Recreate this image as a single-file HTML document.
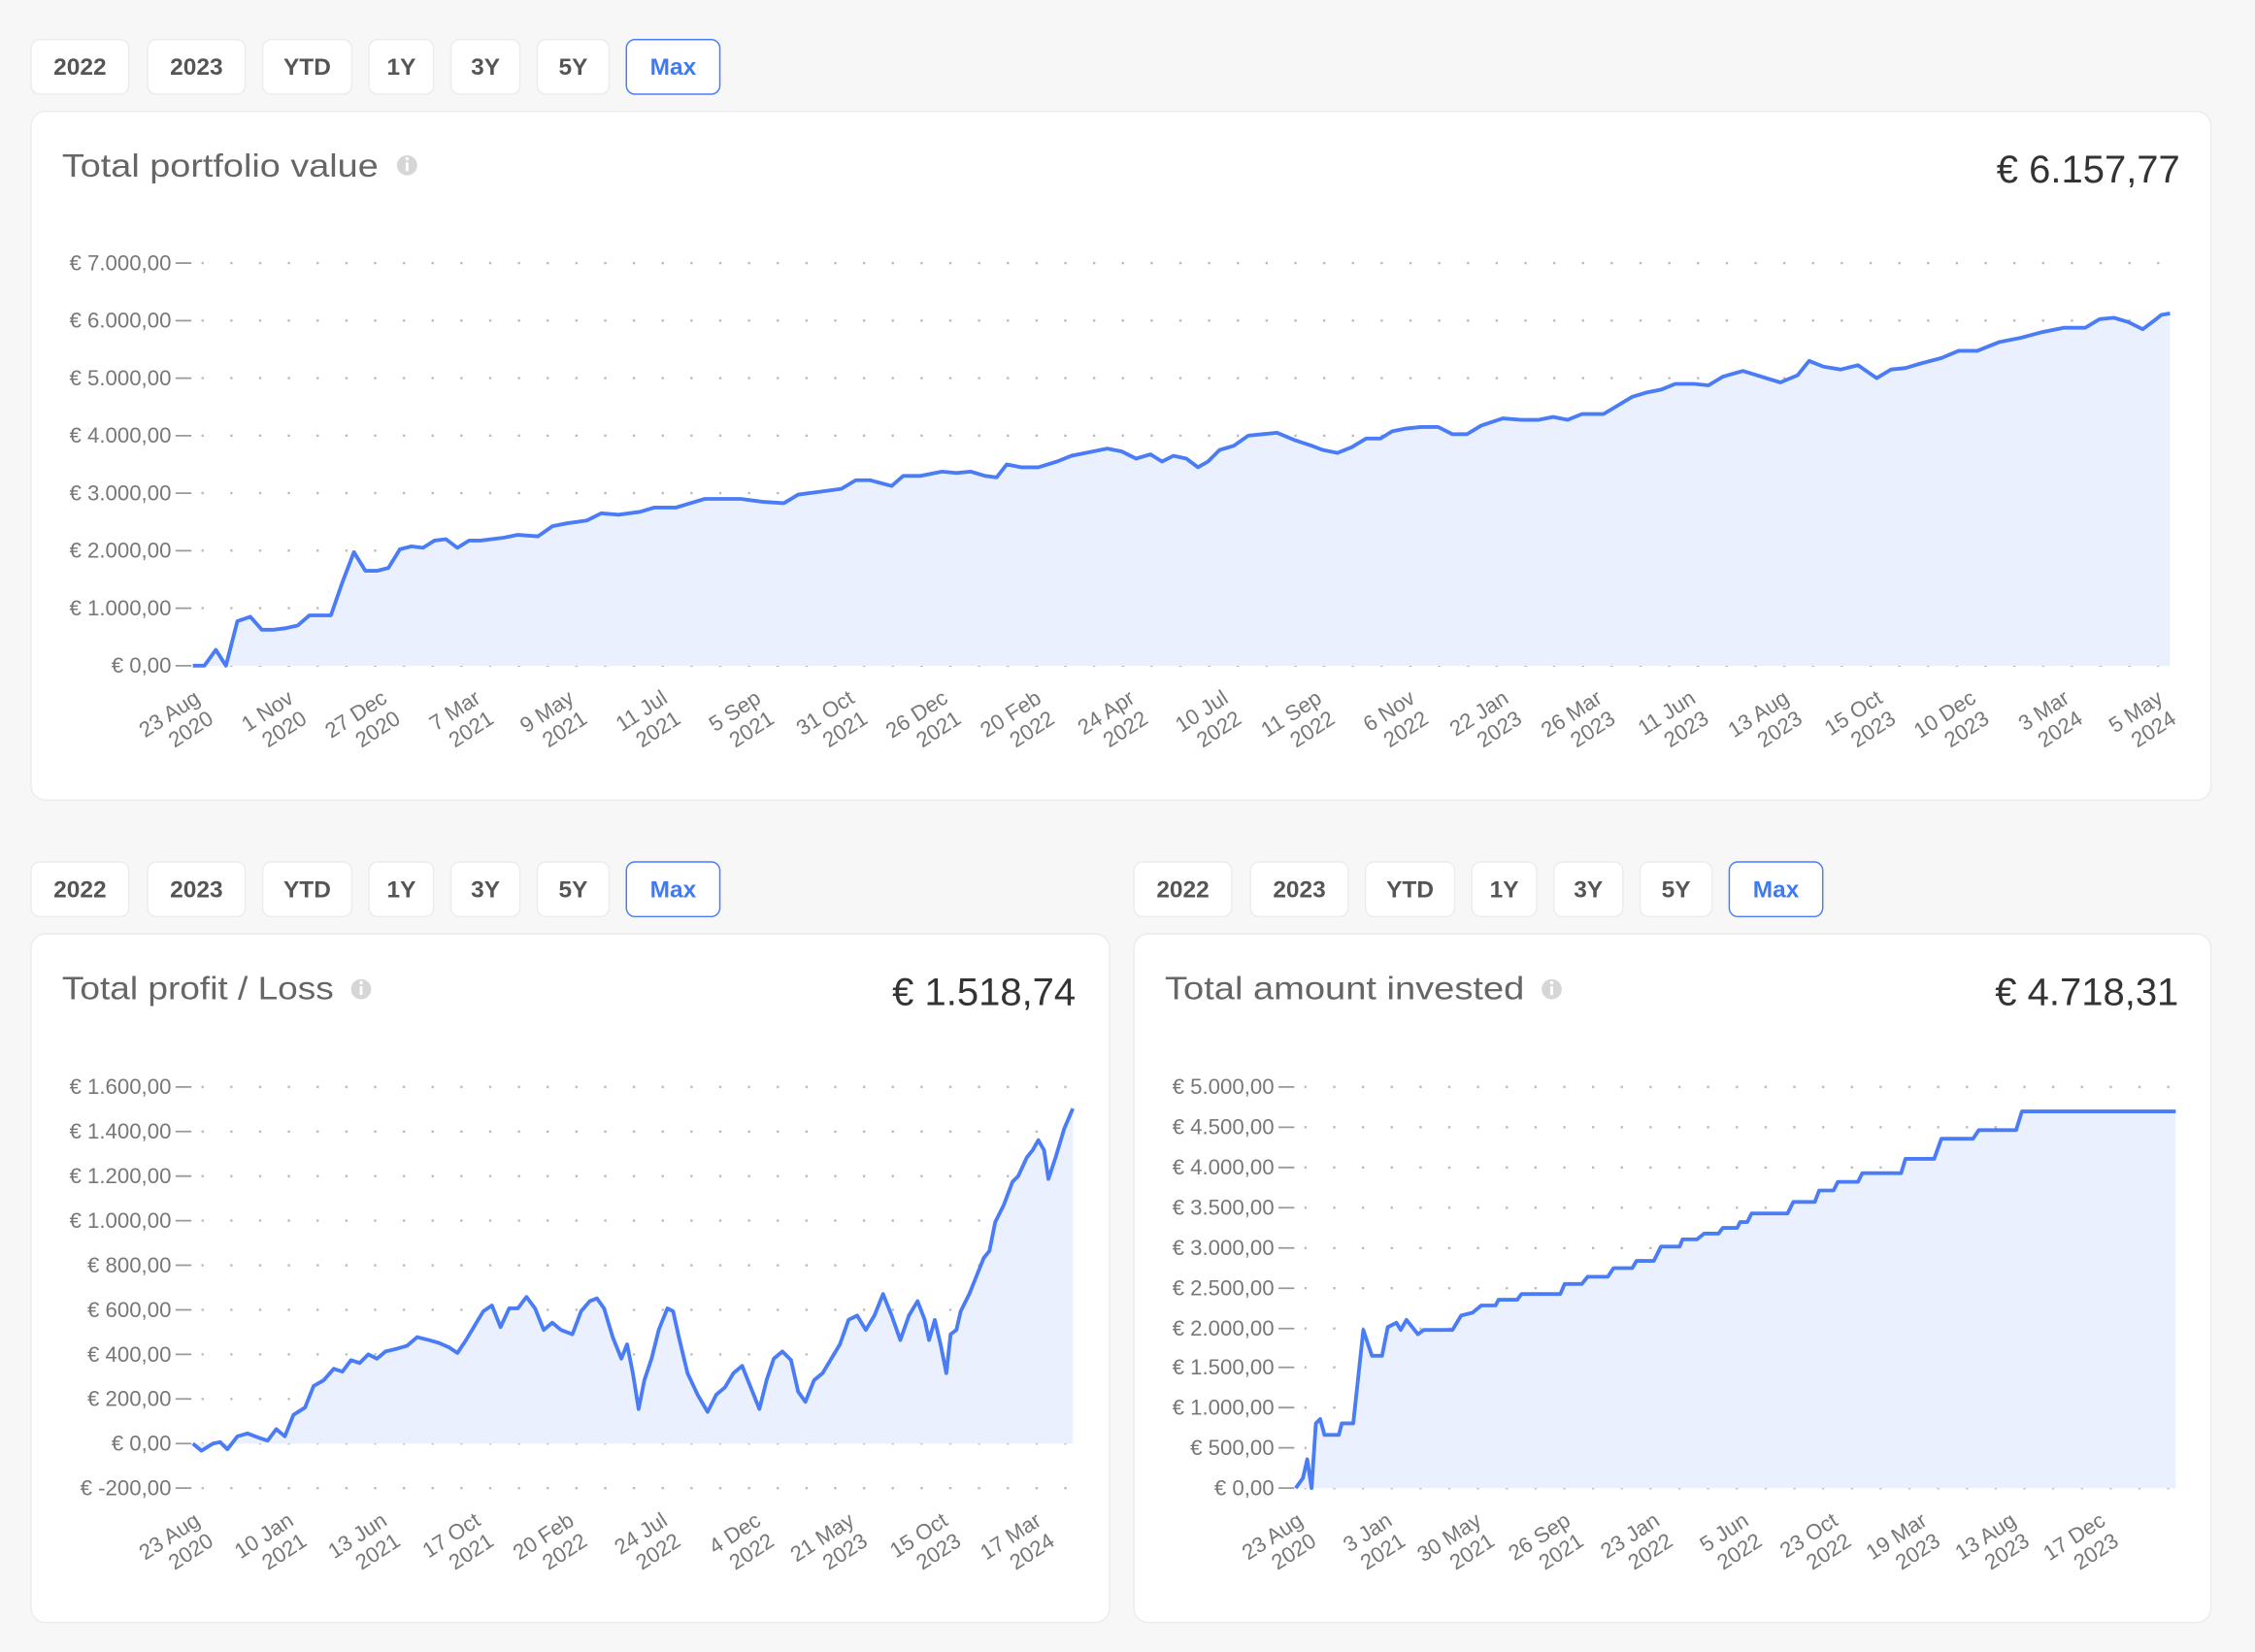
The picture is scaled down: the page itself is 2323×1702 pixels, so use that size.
<!DOCTYPE html>
<html><head><meta charset="utf-8"><style>
html,body{margin:0;padding:0;background:#f7f7f7;}
svg{display:block;}
text{font-family:"Liberation Sans",sans-serif;}
.b{font-size:16.5px;font-weight:bold;fill:#555;text-anchor:middle;}
.bm{font-size:16.5px;font-weight:bold;fill:#3f7af5;text-anchor:middle;}
.t{font-size:22.5px;fill:#666;}
.v{font-size:27px;fill:#333;text-anchor:end;}
.y{font-size:15px;fill:#777;text-anchor:end;}
.x{font-size:15px;fill:#777;text-anchor:end;}
.g{stroke:#bbb;stroke-width:1.6;stroke-dasharray:1.6 18.4;}
.tk{stroke:#999;stroke-width:1.2;}
.ln{fill:none;stroke:#4a7cf7;stroke-width:2.6;stroke-linejoin:round;}
.ar{fill:#eaf0fd;stroke:none;}
</style></head><body>
<svg width="2323" height="1702" viewBox="0 0 1568 1149" xmlns="http://www.w3.org/2000/svg">
<rect width="1568" height="1149" fill="#f7f7f7"/>

<g id="btns">
<rect x="21.5" y="27.5" width="68" height="38" rx="6" fill="#fff" stroke="#ececec"/>
<rect x="102.5" y="27.5" width="68" height="38" rx="6" fill="#fff" stroke="#ececec"/>
<rect x="182.5" y="27.5" width="62" height="38" rx="6" fill="#fff" stroke="#ececec"/>
<rect x="256.5" y="27.5" width="45" height="38" rx="6" fill="#fff" stroke="#ececec"/>
<rect x="313.5" y="27.5" width="48" height="38" rx="6" fill="#fff" stroke="#ececec"/>
<rect x="373.5" y="27.5" width="50" height="38" rx="6" fill="#fff" stroke="#ececec"/>
<rect x="435.5" y="27.5" width="65" height="38" rx="6" fill="#fff" stroke="#4a7cf7"/>
<text class="b" x="55.5" y="52">2022</text>
<text class="b" x="136.5" y="52">2023</text>
<text class="b" x="213.5" y="52">YTD</text>
<text class="b" x="279" y="52">1Y</text>
<text class="b" x="337.5" y="52">3Y</text>
<text class="b" x="398.5" y="52">5Y</text>
<text class="bm" x="468" y="52">Max</text>
</g>
<use href="#btns" x="0" y="572"/>
<use href="#btns" x="767" y="572"/>

<!-- Card 1 -->
<rect x="21.5" y="77.5" width="1516" height="479" rx="10" fill="#fff" stroke="#ececec"/>
<text class="t" x="43" y="123" textLength="220" lengthAdjust="spacingAndGlyphs">Total portfolio value</text>
<circle cx="283" cy="115" r="7" fill="#d6d6d6"/><rect x="282" y="113" width="2" height="6" fill="#fff"/><circle cx="283" cy="110.5" r="1.2" fill="#fff"/>
<text class="v" x="1516" y="127">€ 6.157,77</text>
<g>
<line class="g" x1="140" y1="183" x2="1505" y2="183"/>
<line class="g" x1="140" y1="223" x2="1505" y2="223"/>
<line class="g" x1="140" y1="263" x2="1505" y2="263"/>
<line class="g" x1="140" y1="303" x2="1505" y2="303"/>
<line class="g" x1="140" y1="343" x2="1505" y2="343"/>
<line class="g" x1="140" y1="383" x2="1505" y2="383"/>
<line class="g" x1="140" y1="423" x2="1505" y2="423"/>
<line class="g" x1="140" y1="463" x2="1505" y2="463"/>
<g class="tk"><line x1="122" y1="183" x2="133" y2="183"/><line x1="122" y1="223" x2="133" y2="223"/><line x1="122" y1="263" x2="133" y2="263"/><line x1="122" y1="303" x2="133" y2="303"/><line x1="122" y1="343" x2="133" y2="343"/><line x1="122" y1="383" x2="133" y2="383"/><line x1="122" y1="423" x2="133" y2="423"/><line x1="122" y1="463" x2="133" y2="463"/></g>
<text class="y" x="119" y="188">€ 7.000,00</text>
<text class="y" x="119" y="228">€ 6.000,00</text>
<text class="y" x="119" y="268">€ 5.000,00</text>
<text class="y" x="119" y="308">€ 4.000,00</text>
<text class="y" x="119" y="348">€ 3.000,00</text>
<text class="y" x="119" y="388">€ 2.000,00</text>
<text class="y" x="119" y="428">€ 1.000,00</text>
<text class="y" x="119" y="468">€ 0,00</text>
</g>
<path class="ar" d="M134,463 L142,463 L150,452 L157,463 L165,432 L174,429 L182,438 L190,438 L198,437 L207,435 L215,428 L230,428 L238,405 L246,384 L254,397 L262,397 L270,395 L278,382 L286,380 L294,381 L302,376 L310,375 L318,381 L326,376 L334,376 L350,374 L360,372 L374,373 L384,366 L394,364 L408,362 L418,357 L430,358 L445,356 L455,353 L470,353 L480,350 L490,347 L500,347 L515,347 L530,349 L545,350 L555,344 L570,342 L585,340 L595,334 L605,334 L620,338 L628,331 L640,331 L655,328 L665,329 L675,328 L685,331 L693,332 L700,323 L710,325 L722,325 L735,321 L745,317 L760,314 L770,312 L780,314 L790,319 L800,316 L808,321 L816,317 L825,319 L833,325 L840,321 L848,313 L858,310 L868,303 L878,302 L888,301 L900,306 L912,310 L920,313 L930,315 L940,311 L950,305 L960,305 L968,300 L978,298 L988,297 L1000,297 L1010,302 L1020,302 L1030,296 L1045,291 L1058,292 L1070,292 L1080,290 L1090,292 L1100,288 L1115,288 L1125,282 L1135,276 L1145,273 L1155,271 L1165,267 L1178,267 L1188,268 L1198,262 L1212,258 L1225,262 L1238,266 L1250,261 L1258,251 L1268,255 L1280,257 L1292,254 L1305,263 L1315,257 L1325,256 L1335,253 L1350,249 L1362,244 L1375,244 L1390,238 L1405,235 L1420,231 L1435,228 L1450,228 L1460,222 L1470,221 L1480,224 L1490,229 L1498,223 L1503,219 L1509,218 L1509,463 Z"/>
<path class="ln" d="M134,463 L142,463 L150,452 L157,463 L165,432 L174,429 L182,438 L190,438 L198,437 L207,435 L215,428 L230,428 L238,405 L246,384 L254,397 L262,397 L270,395 L278,382 L286,380 L294,381 L302,376 L310,375 L318,381 L326,376 L334,376 L350,374 L360,372 L374,373 L384,366 L394,364 L408,362 L418,357 L430,358 L445,356 L455,353 L470,353 L480,350 L490,347 L500,347 L515,347 L530,349 L545,350 L555,344 L570,342 L585,340 L595,334 L605,334 L620,338 L628,331 L640,331 L655,328 L665,329 L675,328 L685,331 L693,332 L700,323 L710,325 L722,325 L735,321 L745,317 L760,314 L770,312 L780,314 L790,319 L800,316 L808,321 L816,317 L825,319 L833,325 L840,321 L848,313 L858,310 L868,303 L878,302 L888,301 L900,306 L912,310 L920,313 L930,315 L940,311 L950,305 L960,305 L968,300 L978,298 L988,297 L1000,297 L1010,302 L1020,302 L1030,296 L1045,291 L1058,292 L1070,292 L1080,290 L1090,292 L1100,288 L1115,288 L1125,282 L1135,276 L1145,273 L1155,271 L1165,267 L1178,267 L1188,268 L1198,262 L1212,258 L1225,262 L1238,266 L1250,261 L1258,251 L1268,255 L1280,257 L1292,254 L1305,263 L1315,257 L1325,256 L1335,253 L1350,249 L1362,244 L1375,244 L1390,238 L1405,235 L1420,231 L1435,228 L1450,228 L1460,222 L1470,221 L1480,224 L1490,229 L1498,223 L1503,219 L1509,218"/>
<g>
<g transform="translate(140,488) rotate(-33)"><text class="x">23 Aug</text><text class="x" y="17">2020</text></g>
<g transform="translate(205,488) rotate(-33)"><text class="x">1 Nov</text><text class="x" y="17">2020</text></g>
<g transform="translate(270,488) rotate(-33)"><text class="x">27 Dec</text><text class="x" y="17">2020</text></g>
<g transform="translate(335,488) rotate(-33)"><text class="x">7 Mar</text><text class="x" y="17">2021</text></g>
<g transform="translate(400,488) rotate(-33)"><text class="x">9 May</text><text class="x" y="17">2021</text></g>
<g transform="translate(465,488) rotate(-33)"><text class="x">11 Jul</text><text class="x" y="17">2021</text></g>
<g transform="translate(530,488) rotate(-33)"><text class="x">5 Sep</text><text class="x" y="17">2021</text></g>
<g transform="translate(595,488) rotate(-33)"><text class="x">31 Oct</text><text class="x" y="17">2021</text></g>
<g transform="translate(660,488) rotate(-33)"><text class="x">26 Dec</text><text class="x" y="17">2021</text></g>
<g transform="translate(725,488) rotate(-33)"><text class="x">20 Feb</text><text class="x" y="17">2022</text></g>
<g transform="translate(790,488) rotate(-33)"><text class="x">24 Apr</text><text class="x" y="17">2022</text></g>
<g transform="translate(855,488) rotate(-33)"><text class="x">10 Jul</text><text class="x" y="17">2022</text></g>
<g transform="translate(920,488) rotate(-33)"><text class="x">11 Sep</text><text class="x" y="17">2022</text></g>
<g transform="translate(985,488) rotate(-33)"><text class="x">6 Nov</text><text class="x" y="17">2022</text></g>
<g transform="translate(1050,488) rotate(-33)"><text class="x">22 Jan</text><text class="x" y="17">2023</text></g>
<g transform="translate(1115,488) rotate(-33)"><text class="x">26 Mar</text><text class="x" y="17">2023</text></g>
<g transform="translate(1180,488) rotate(-33)"><text class="x">11 Jun</text><text class="x" y="17">2023</text></g>
<g transform="translate(1245,488) rotate(-33)"><text class="x">13 Aug</text><text class="x" y="17">2023</text></g>
<g transform="translate(1310,488) rotate(-33)"><text class="x">15 Oct</text><text class="x" y="17">2023</text></g>
<g transform="translate(1375,488) rotate(-33)"><text class="x">10 Dec</text><text class="x" y="17">2023</text></g>
<g transform="translate(1440,488) rotate(-33)"><text class="x">3 Mar</text><text class="x" y="17">2024</text></g>
<g transform="translate(1505,488) rotate(-33)"><text class="x">5 May</text><text class="x" y="17">2024</text></g>
</g>

<!-- Card 2 -->
<rect x="21.5" y="649.5" width="750" height="479" rx="10" fill="#fff" stroke="#ececec"/>
<text class="t" x="43" y="695" textLength="189" lengthAdjust="spacingAndGlyphs">Total profit / Loss</text>
<circle cx="251" cy="688" r="7" fill="#d6d6d6"/><rect x="250" y="686" width="2" height="6" fill="#fff"/><circle cx="251" cy="683.5" r="1.2" fill="#fff"/>
<text class="v" x="748" y="699">€ 1.518,74</text>
<g>
<line class="g" x1="140" y1="756" x2="748" y2="756"/>
<line class="g" x1="140" y1="787" x2="748" y2="787"/>
<line class="g" x1="140" y1="818" x2="748" y2="818"/>
<line class="g" x1="140" y1="849" x2="748" y2="849"/>
<line class="g" x1="140" y1="880" x2="748" y2="880"/>
<line class="g" x1="140" y1="911" x2="748" y2="911"/>
<line class="g" x1="140" y1="942" x2="748" y2="942"/>
<line class="g" x1="140" y1="973" x2="748" y2="973"/>
<line class="g" x1="140" y1="1004" x2="748" y2="1004"/>
<line class="g" x1="140" y1="1035" x2="748" y2="1035"/>
<g class="tk"><line x1="122" y1="756" x2="133" y2="756"/><line x1="122" y1="787" x2="133" y2="787"/><line x1="122" y1="818" x2="133" y2="818"/><line x1="122" y1="849" x2="133" y2="849"/><line x1="122" y1="880" x2="133" y2="880"/><line x1="122" y1="911" x2="133" y2="911"/><line x1="122" y1="942" x2="133" y2="942"/><line x1="122" y1="973" x2="133" y2="973"/><line x1="122" y1="1004" x2="133" y2="1004"/><line x1="122" y1="1035" x2="133" y2="1035"/></g>
<text class="y" x="119" y="761">€ 1.600,00</text>
<text class="y" x="119" y="792">€ 1.400,00</text>
<text class="y" x="119" y="823">€ 1.200,00</text>
<text class="y" x="119" y="854">€ 1.000,00</text>
<text class="y" x="119" y="885">€ 800,00</text>
<text class="y" x="119" y="916">€ 600,00</text>
<text class="y" x="119" y="947">€ 400,00</text>
<text class="y" x="119" y="978">€ 200,00</text>
<text class="y" x="119" y="1009">€ 0,00</text>
<text class="y" x="119" y="1040">€ -200,00</text>
</g>
<path class="ar" d="M134,1004 L140,1009 L148,1004 L153,1003 L158,1008 L165,999 L172,997 L180,1000 L186,1002 L192,994 L198,999 L204,984 L212,979 L218,964 L225,960 L232,952 L238,954 L244,946 L250,948 L256,942 L262,945 L268,940 L276,938 L283,936 L290,930 L298,932 L305,934 L312,937 L318,941 L324,932 L330,922 L336,912 L342,908 L348,923 L354,910 L360,910 L366,902 L372,910 L378,925 L384,920 L390,925 L398,928 L404,912 L410,905 L415,903 L420,910 L426,930 L432,945 L436,935 L440,955 L444,980 L448,960 L453,945 L458,925 L464,910 L468,912 L472,930 L478,955 L485,970 L492,982 L498,970 L504,965 L510,955 L516,950 L520,960 L524,970 L528,980 L533,960 L538,945 L544,940 L550,946 L555,968 L560,975 L566,960 L572,955 L578,945 L584,935 L590,918 L596,915 L602,925 L608,915 L614,900 L620,915 L626,932 L632,915 L638,905 L643,918 L646,932 L650,918 L654,935 L658,955 L661,928 L665,925 L668,912 L674,900 L680,885 L684,875 L688,870 L692,850 L698,838 L704,822 L708,818 L714,805 L718,800 L722,793 L726,800 L729,820 L734,805 L740,785 L746,771 L746,1004 Z"/>
<path class="ln" d="M134,1004 L140,1009 L148,1004 L153,1003 L158,1008 L165,999 L172,997 L180,1000 L186,1002 L192,994 L198,999 L204,984 L212,979 L218,964 L225,960 L232,952 L238,954 L244,946 L250,948 L256,942 L262,945 L268,940 L276,938 L283,936 L290,930 L298,932 L305,934 L312,937 L318,941 L324,932 L330,922 L336,912 L342,908 L348,923 L354,910 L360,910 L366,902 L372,910 L378,925 L384,920 L390,925 L398,928 L404,912 L410,905 L415,903 L420,910 L426,930 L432,945 L436,935 L440,955 L444,980 L448,960 L453,945 L458,925 L464,910 L468,912 L472,930 L478,955 L485,970 L492,982 L498,970 L504,965 L510,955 L516,950 L520,960 L524,970 L528,980 L533,960 L538,945 L544,940 L550,946 L555,968 L560,975 L566,960 L572,955 L578,945 L584,935 L590,918 L596,915 L602,925 L608,915 L614,900 L620,915 L626,932 L632,915 L638,905 L643,918 L646,932 L650,918 L654,935 L658,955 L661,928 L665,925 L668,912 L674,900 L680,885 L684,875 L688,870 L692,850 L698,838 L704,822 L708,818 L714,805 L718,800 L722,793 L726,800 L729,820 L734,805 L740,785 L746,771"/>
<g>
<g transform="translate(140,1060) rotate(-33)"><text class="x">23 Aug</text><text class="x" y="17">2020</text></g>
<g transform="translate(205,1060) rotate(-33)"><text class="x">10 Jan</text><text class="x" y="17">2021</text></g>
<g transform="translate(270,1060) rotate(-33)"><text class="x">13 Jun</text><text class="x" y="17">2021</text></g>
<g transform="translate(335,1060) rotate(-33)"><text class="x">17 Oct</text><text class="x" y="17">2021</text></g>
<g transform="translate(400,1060) rotate(-33)"><text class="x">20 Feb</text><text class="x" y="17">2022</text></g>
<g transform="translate(465,1060) rotate(-33)"><text class="x">24 Jul</text><text class="x" y="17">2022</text></g>
<g transform="translate(530,1060) rotate(-33)"><text class="x">4 Dec</text><text class="x" y="17">2022</text></g>
<g transform="translate(595,1060) rotate(-33)"><text class="x">21 May</text><text class="x" y="17">2023</text></g>
<g transform="translate(660,1060) rotate(-33)"><text class="x">15 Oct</text><text class="x" y="17">2023</text></g>
<g transform="translate(725,1060) rotate(-33)"><text class="x">17 Mar</text><text class="x" y="17">2024</text></g>
</g>

<!-- Card 3 -->
<rect x="788.5" y="649.5" width="749" height="479" rx="10" fill="#fff" stroke="#ececec"/>
<text class="t" x="810" y="695" textLength="250" lengthAdjust="spacingAndGlyphs">Total amount invested</text>
<circle cx="1079" cy="688" r="7" fill="#d6d6d6"/><rect x="1078" y="686" width="2" height="6" fill="#fff"/><circle cx="1079" cy="683.5" r="1.2" fill="#fff"/>
<text class="v" x="1515" y="699">€ 4.718,31</text>
<g>
<line class="g" x1="907" y1="756" x2="1514" y2="756"/>
<line class="g" x1="907" y1="784" x2="1514" y2="784"/>
<line class="g" x1="907" y1="812" x2="1514" y2="812"/>
<line class="g" x1="907" y1="840" x2="1514" y2="840"/>
<line class="g" x1="907" y1="868" x2="1514" y2="868"/>
<line class="g" x1="907" y1="896" x2="1514" y2="896"/>
<line class="g" x1="907" y1="924" x2="1514" y2="924"/>
<line class="g" x1="907" y1="951" x2="1514" y2="951"/>
<line class="g" x1="907" y1="979" x2="1514" y2="979"/>
<line class="g" x1="907" y1="1007" x2="1514" y2="1007"/>
<line class="g" x1="907" y1="1035" x2="1514" y2="1035"/>
<g class="tk"><line x1="889" y1="756" x2="900" y2="756"/><line x1="889" y1="784" x2="900" y2="784"/><line x1="889" y1="812" x2="900" y2="812"/><line x1="889" y1="840" x2="900" y2="840"/><line x1="889" y1="868" x2="900" y2="868"/><line x1="889" y1="896" x2="900" y2="896"/><line x1="889" y1="924" x2="900" y2="924"/><line x1="889" y1="951" x2="900" y2="951"/><line x1="889" y1="979" x2="900" y2="979"/><line x1="889" y1="1007" x2="900" y2="1007"/><line x1="889" y1="1035" x2="900" y2="1035"/></g>
<text class="y" x="886" y="761">€ 5.000,00</text>
<text class="y" x="886" y="789">€ 4.500,00</text>
<text class="y" x="886" y="817">€ 4.000,00</text>
<text class="y" x="886" y="845">€ 3.500,00</text>
<text class="y" x="886" y="873">€ 3.000,00</text>
<text class="y" x="886" y="901">€ 2.500,00</text>
<text class="y" x="886" y="929">€ 2.000,00</text>
<text class="y" x="886" y="956">€ 1.500,00</text>
<text class="y" x="886" y="984">€ 1.000,00</text>
<text class="y" x="886" y="1012">€ 500,00</text>
<text class="y" x="886" y="1040">€ 0,00</text>
</g>
<path class="ar" d="M901,1035 L906,1028 L909,1015 L912,1035 L915,990 L918,987 L921,998 L931,998 L933,990 L941,990 L948,925 L954,943 L961,943 L965,923 L971,920 L974,925 L978,918 L982,923 L986,928 L990,925 L1010,925 L1016,915 L1024,913 L1030,908 L1040,908 L1042,904 L1055,904 L1058,900 L1085,900 L1088,893 L1100,893 L1104,888 L1118,888 L1122,882 L1135,882 L1138,877 L1150,877 L1155,867 L1168,867 L1170,862 L1180,862 L1185,858 L1195,858 L1198,854 L1208,854 L1210,850 L1215,850 L1218,844 L1243,844 L1247,836 L1262,836 L1265,828 L1275,828 L1278,822 L1292,822 L1295,816 L1322,816 L1325,806 L1345,806 L1350,792 L1372,792 L1376,786 L1402,786 L1406,773 L1513,773 L1513,1035 Z"/>
<path class="ln" d="M901,1035 L906,1028 L909,1015 L912,1035 L915,990 L918,987 L921,998 L931,998 L933,990 L941,990 L948,925 L954,943 L961,943 L965,923 L971,920 L974,925 L978,918 L982,923 L986,928 L990,925 L1010,925 L1016,915 L1024,913 L1030,908 L1040,908 L1042,904 L1055,904 L1058,900 L1085,900 L1088,893 L1100,893 L1104,888 L1118,888 L1122,882 L1135,882 L1138,877 L1150,877 L1155,867 L1168,867 L1170,862 L1180,862 L1185,858 L1195,858 L1198,854 L1208,854 L1210,850 L1215,850 L1218,844 L1243,844 L1247,836 L1262,836 L1265,828 L1275,828 L1278,822 L1292,822 L1295,816 L1322,816 L1325,806 L1345,806 L1350,792 L1372,792 L1376,786 L1402,786 L1406,773 L1513,773"/>
<g>
<g transform="translate(907,1060) rotate(-33)"><text class="x">23 Aug</text><text class="x" y="17">2020</text></g>
<g transform="translate(969,1060) rotate(-33)"><text class="x">3 Jan</text><text class="x" y="17">2021</text></g>
<g transform="translate(1031,1060) rotate(-33)"><text class="x">30 May</text><text class="x" y="17">2021</text></g>
<g transform="translate(1093,1060) rotate(-33)"><text class="x">26 Sep</text><text class="x" y="17">2021</text></g>
<g transform="translate(1155,1060) rotate(-33)"><text class="x">23 Jan</text><text class="x" y="17">2022</text></g>
<g transform="translate(1217,1060) rotate(-33)"><text class="x">5 Jun</text><text class="x" y="17">2022</text></g>
<g transform="translate(1279,1060) rotate(-33)"><text class="x">23 Oct</text><text class="x" y="17">2022</text></g>
<g transform="translate(1341,1060) rotate(-33)"><text class="x">19 Mar</text><text class="x" y="17">2023</text></g>
<g transform="translate(1403,1060) rotate(-33)"><text class="x">13 Aug</text><text class="x" y="17">2023</text></g>
<g transform="translate(1465,1060) rotate(-33)"><text class="x">17 Dec</text><text class="x" y="17">2023</text></g>
</g>
</svg>
</body></html>
